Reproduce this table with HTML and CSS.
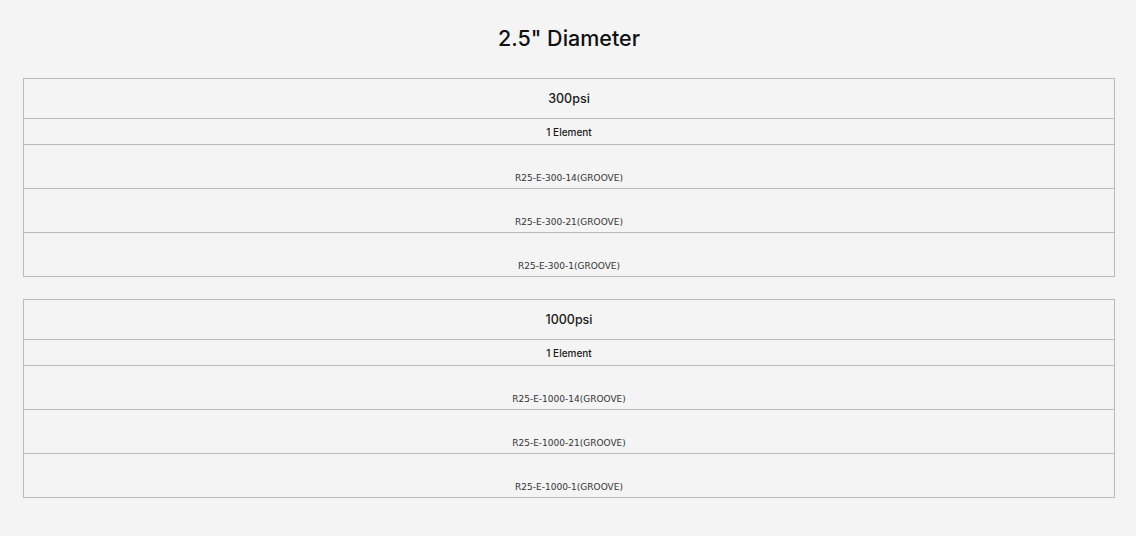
FILE: index.html
```html
<!DOCTYPE html>
<html>
<head>
<meta charset="utf-8">
<link rel="stylesheet" href="styles.css">
</head>
<body>
<main class="page">
  <h1 class="title">2.5" Diameter</h1>
  <table class="spec">
    <tr><th class="head">300psi</th></tr>
    <tr><td class="sub">1 Element</td></tr>
    <tr><td class="item">R25-E-300-14(GROOVE)</td></tr>
    <tr><td class="item">R25-E-300-21(GROOVE)</td></tr>
    <tr><td class="item">R25-E-300-1(GROOVE)</td></tr>
  </table>
  <table class="spec">
    <tr><th class="head">1000psi</th></tr>
    <tr><td class="sub">1 Element</td></tr>
    <tr><td class="item">R25-E-1000-14(GROOVE)</td></tr>
    <tr><td class="item">R25-E-1000-21(GROOVE)</td></tr>
    <tr><td class="item">R25-E-1000-1(GROOVE)</td></tr>
  </table>
</main>
</body>
</html>
```
FILE: styles.css
```css
html, body {
  margin: 0;
  background: #f4f4f4;
}
body {
  font-family: "Inter", "Noto Sans", sans-serif;
  color: #1a1a1a;
}
.page {
  padding: 22px 21px 20px 23px;
  display: flex;
  flex-direction: column;
  gap: 22px;
}
.title {
  margin: 0 0 2px;
  text-align: center;
  font-size: 21.5px;
  font-weight: 500;
  line-height: 32px;
  color: #111;
}
.spec {
  width: 100%;
  border-collapse: collapse;
  border: 1px solid #bbb;
}
.spec th, .spec td {
  border: 1px solid #bbb;
  text-align: center;
  padding: 0;
}
.head {
  height: 39px;
  font-size: 12.5px;
  font-weight: 500;
}
.sub {
  height: 25px;
  font-size: 10px;
  font-weight: 500;
}
.item {
  height: 44px;
  box-sizing: border-box;
  padding: 24px 0 0 !important;
  vertical-align: top;
  font-family: "DejaVu Sans", sans-serif;
  font-size: 12.5px;
  font-variant: all-small-caps;
  line-height: 15px;
  color: #333;
}
```
